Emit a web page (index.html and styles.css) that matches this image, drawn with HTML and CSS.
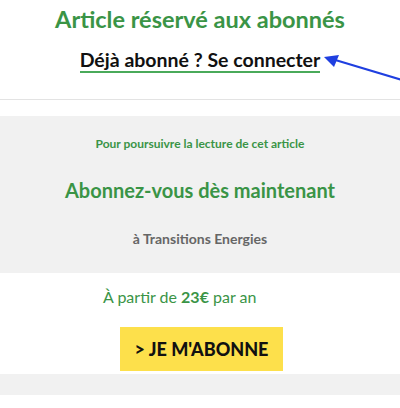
FILE: index.html
```html
<!DOCTYPE html>
<html lang="fr">
<head>
    <meta charset="UTF-8">
    <meta name="viewport" content="width=device-width, initial-scale=1.0">
    <title>Article réservé aux abonnés</title>
    <link rel="stylesheet" href="styles.css">
</head>
<body>
    <div class="paywall">
        <div class="paywall-head">
            <h2 class="paywall-title">Article réservé aux abonnés</h2>
            <p class="login">
                <a href="#" class="login-link">Déjà abonné ? Se connecter</a>
                <svg class="arrow" width="80" height="30" viewBox="0 0 80 30">
                    <line x1="80" y1="25" x2="10" y2="4" stroke="#1f3fe0" stroke-width="2.2"/>
                    <polygon points="2,2 17,0 12,12" fill="#1f3fe0"/>
                </svg>
            </p>
        </div>

        <div class="offer">
            <p class="offer-intro">Pour poursuivre la lecture de cet article</p>
            <p class="offer-title">Abonnez-vous dès maintenant</p>
            <p class="offer-site">à Transitions Energies</p>
        </div>

        <p class="price">À partir de <strong>23€</strong> par an</p>

        <div class="btnn">
            <a href="#" class="btn-subscribe">&gt; JE M'ABONNE</a>
        </div>

        <div class="footer-band"></div>
    </div>
</body>
</html>
```

FILE: styles.css
```css
body {
    margin: 0;
    padding: 0;
    background: #fff;
    font-family: Lato, "Open Sans", sans-serif;
}
.paywall {
    width: 400px;
    overflow: hidden;
}
.paywall-head {
    text-align: center;
    border-bottom: 1px solid #e3e3e3;
    height: 99px;
}
.paywall-title {
    margin: 0;
    padding-top: 4px;
    font-size: 23.5px;
    font-weight: 700;
    line-height: 30px;
    color: #3a9446;
}
.login {
    position: relative;
    margin: 13px 0 0;
    line-height: 25px;
}
.login-link {
    font-size: 19.5px;
    font-weight: 700;
    color: #111;
    text-decoration: none;
    border-bottom: 2px solid #4aaa5a;
    padding-bottom: 0;
}
.arrow {
    position: absolute;
    left: 322px;
    top: 8px;
}
.offer {
    margin-top: 16px;
    background: #f1f1f1;
    height: 157px;
    text-align: center;
    overflow: hidden;
}
.offer p {
    margin: 0;
}
.offer-intro {
    padding-top: 20px;
    font-size: 12px;
    font-weight: 700;
    color: #3a9446;
    line-height: 15px;
}
.offer-title {
    padding-top: 27px;
    font-size: 20px;
    font-weight: 700;
    color: #3a9446;
    line-height: 24px;
}
.offer-site {
    padding-top: 28px;
    font-size: 14px;
    font-weight: 700;
    color: #666;
    line-height: 18px;
}
.price {
    margin: 0;
    padding: 14px 0 0 103px;
    font-size: 16px;
    line-height: 20px;
    color: #3a9446;
}
.btnn {
    padding-top: 20px;
    height: 44px;
    display: flex;
    justify-content: center;
}
.btn-subscribe {
    margin-left: 3px;
    width: 163px;
    height: 44px;
    display: flex;
    align-items: center;
    justify-content: center;
    background: #fde04b;
    color: #111;
    font-size: 18px;
    font-weight: 900;
    text-decoration: none;
}
.footer-band {
    margin-top: 3px;
    height: 21px;
    background: #f1f1f1;
}
```
